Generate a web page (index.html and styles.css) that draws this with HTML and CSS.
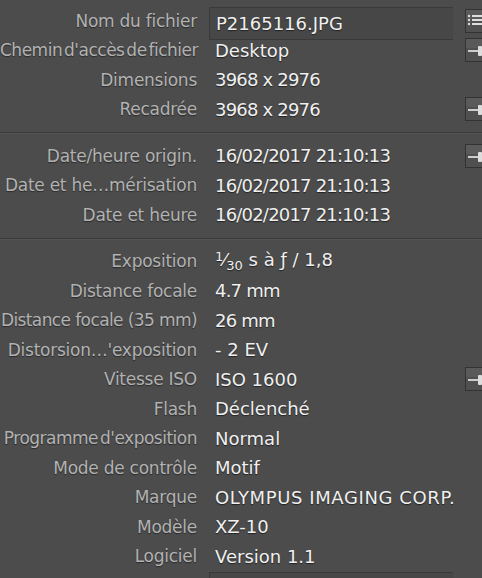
FILE: index.html
```html
<!DOCTYPE html>
<html lang="fr">
<head>
  <meta charset="UTF-8">
  <meta name="viewport" content="width=device-width, initial-scale=1.0">
  <title>Métadonnées</title>
  <link rel="stylesheet" href="styles.css">
</head>
<body>
  <div class="panel">
    <div class="group">
      <div class="row">
        <span class="label">Nom du fichier</span>
        <span class="value field">P2165116.JPG</span>
        <span class="btn">
          <svg width="26" height="24" viewBox="0 0 26 24"><g fill="#ddd"><circle cx="4" cy="7" r="1.2"/><circle cx="4" cy="11" r="1.2"/><circle cx="4" cy="15" r="1.2"/><rect x="7" y="6" width="14" height="2"/><rect x="7" y="10" width="14" height="2"/><rect x="7" y="14" width="14" height="2"/></g></svg>
        </span>
      </div>
      <div class="row">
        <span class="label tight">Chemin d'accès de fichier</span>
        <span class="value">Desktop</span>
        <span class="btn"><svg width="26" height="24" viewBox="0 0 26 24"><rect x="3" y="12" width="11" height="2" fill="#ccc"/><rect x="13" y="8" width="4" height="10" rx="1" fill="#ddd"/></svg></span>
      </div>
      <div class="row">
        <span class="label">Dimensions</span>
        <span class="value num">3968 x 2976</span>
      </div>
      <div class="row">
        <span class="label">Recadrée</span>
        <span class="value num">3968 x 2976</span>
        <span class="btn"><svg width="26" height="24" viewBox="0 0 26 24"><rect x="3" y="12" width="11" height="2" fill="#ccc"/><rect x="13" y="8" width="4" height="10" rx="1" fill="#ddd"/></svg></span>
      </div>
    </div>

    <div class="sep"></div>

    <div class="group">
      <div class="row">
        <span class="label">Date/heure origin.</span>
        <span class="value num">16/02/2017 21:10:13</span>
        <span class="btn"><svg width="26" height="24" viewBox="0 0 26 24"><rect x="3" y="12" width="11" height="2" fill="#ccc"/><rect x="13" y="8" width="4" height="10" rx="1" fill="#ddd"/></svg></span>
      </div>
      <div class="row">
        <span class="label">Date et he…mérisation</span>
        <span class="value num">16/02/2017 21:10:13</span>
      </div>
      <div class="row">
        <span class="label">Date et heure</span>
        <span class="value num">16/02/2017 21:10:13</span>
      </div>
    </div>

    <div class="sep"></div>

    <div class="group">
      <div class="row">
        <span class="label">Exposition</span>
        <span class="value"><span class="frac-top">1</span>⁄<span class="frac-bot">30</span> s à ƒ / 1,8</span>
      </div>
      <div class="row">
        <span class="label">Distance focale</span>
        <span class="value num">4.7 mm</span>
      </div>
      <div class="row">
        <span class="label narrow">Distance focale (35 mm)</span>
        <span class="value num">26 mm</span>
      </div>
      <div class="row">
        <span class="label">Distorsion…'exposition</span>
        <span class="value">- 2 EV</span>
      </div>
      <div class="row">
        <span class="label">Vitesse ISO</span>
        <span class="value">ISO 1600</span>
        <span class="btn"><svg width="26" height="24" viewBox="0 0 26 24"><rect x="3" y="12" width="11" height="2" fill="#ccc"/><rect x="13" y="8" width="4" height="10" rx="1" fill="#ddd"/></svg></span>
      </div>
      <div class="row">
        <span class="label">Flash</span>
        <span class="value">Déclenché</span>
      </div>
      <div class="row">
        <span class="label tight">Programme d'exposition</span>
        <span class="value">Normal</span>
      </div>
      <div class="row">
        <span class="label">Mode de contrôle</span>
        <span class="value">Motif</span>
      </div>
      <div class="row">
        <span class="label">Marque</span>
        <span class="value caps">OLYMPUS IMAGING CORP.</span>
      </div>
      <div class="row">
        <span class="label">Modèle</span>
        <span class="value">XZ-10</span>
      </div>
      <div class="row">
        <span class="label">Logiciel</span>
        <span class="value">Version 1.1</span>
      </div>
      <div class="row">
        <span class="label"></span>
        <span class="value field"></span>
      </div>
    </div>
  </div>
</body>
</html>
```

FILE: styles.css
```css
html, body {
  margin: 0;
  background: #4c4c4c;
  overflow: hidden;
}
body {
  width: 482px;
  height: 578px;
  font-family: "DejaVu Sans", Verdana, sans-serif;
}
.panel {
  padding-top: 6px;
}
.row {
  display: grid;
  grid-template-columns: 197px 1fr 17px;
  column-gap: 12px;
  height: 29.5px;
  align-items: center;
}
.label {
  text-align: right;
  color: #b2b2b2;
  font-size: 17px;
  letter-spacing: -0.25px;
  white-space: nowrap;
  text-shadow: 0 1px 1px #2a2a2a;
}
.label.tight {
  letter-spacing: -0.5px;
  word-spacing: -3px;
}
.label.narrow {
  letter-spacing: -0.6px;
}
.value {
  color: #f0f0f0;
  font-size: 18px;
  padding-left: 6px;
  white-space: nowrap;
  text-shadow: 0 1px 1px #222;
}
.value.num {
  letter-spacing: -0.8px;
}
.value.caps {
  letter-spacing: 0.6px;
}
.field {
  align-self: stretch;
  margin: 1px 0 -4px;
  display: flex;
  align-items: center;
  background: #474747;
  border: 1px solid #3a3a3a;
  border-right: none;
}
.btn {
  display: block;
  width: 26px;
  height: 24px;
  box-sizing: border-box;
  border: 1px solid #333;
  background: linear-gradient(#5a5a5a 0 40%, #505050 40% 100%);
}
.btn svg {
  display: block;
  margin: -1px;
}
.frac-top {
  font-size: 13px;
  vertical-align: 5px;
}
.frac-bot {
  font-size: 13px;
  vertical-align: -4px;
}
.sep {
  height: 1px;
  background: #3a3a3a;
  border-bottom: 1px solid #555;
  margin: 8px 0 7px;
}
```
